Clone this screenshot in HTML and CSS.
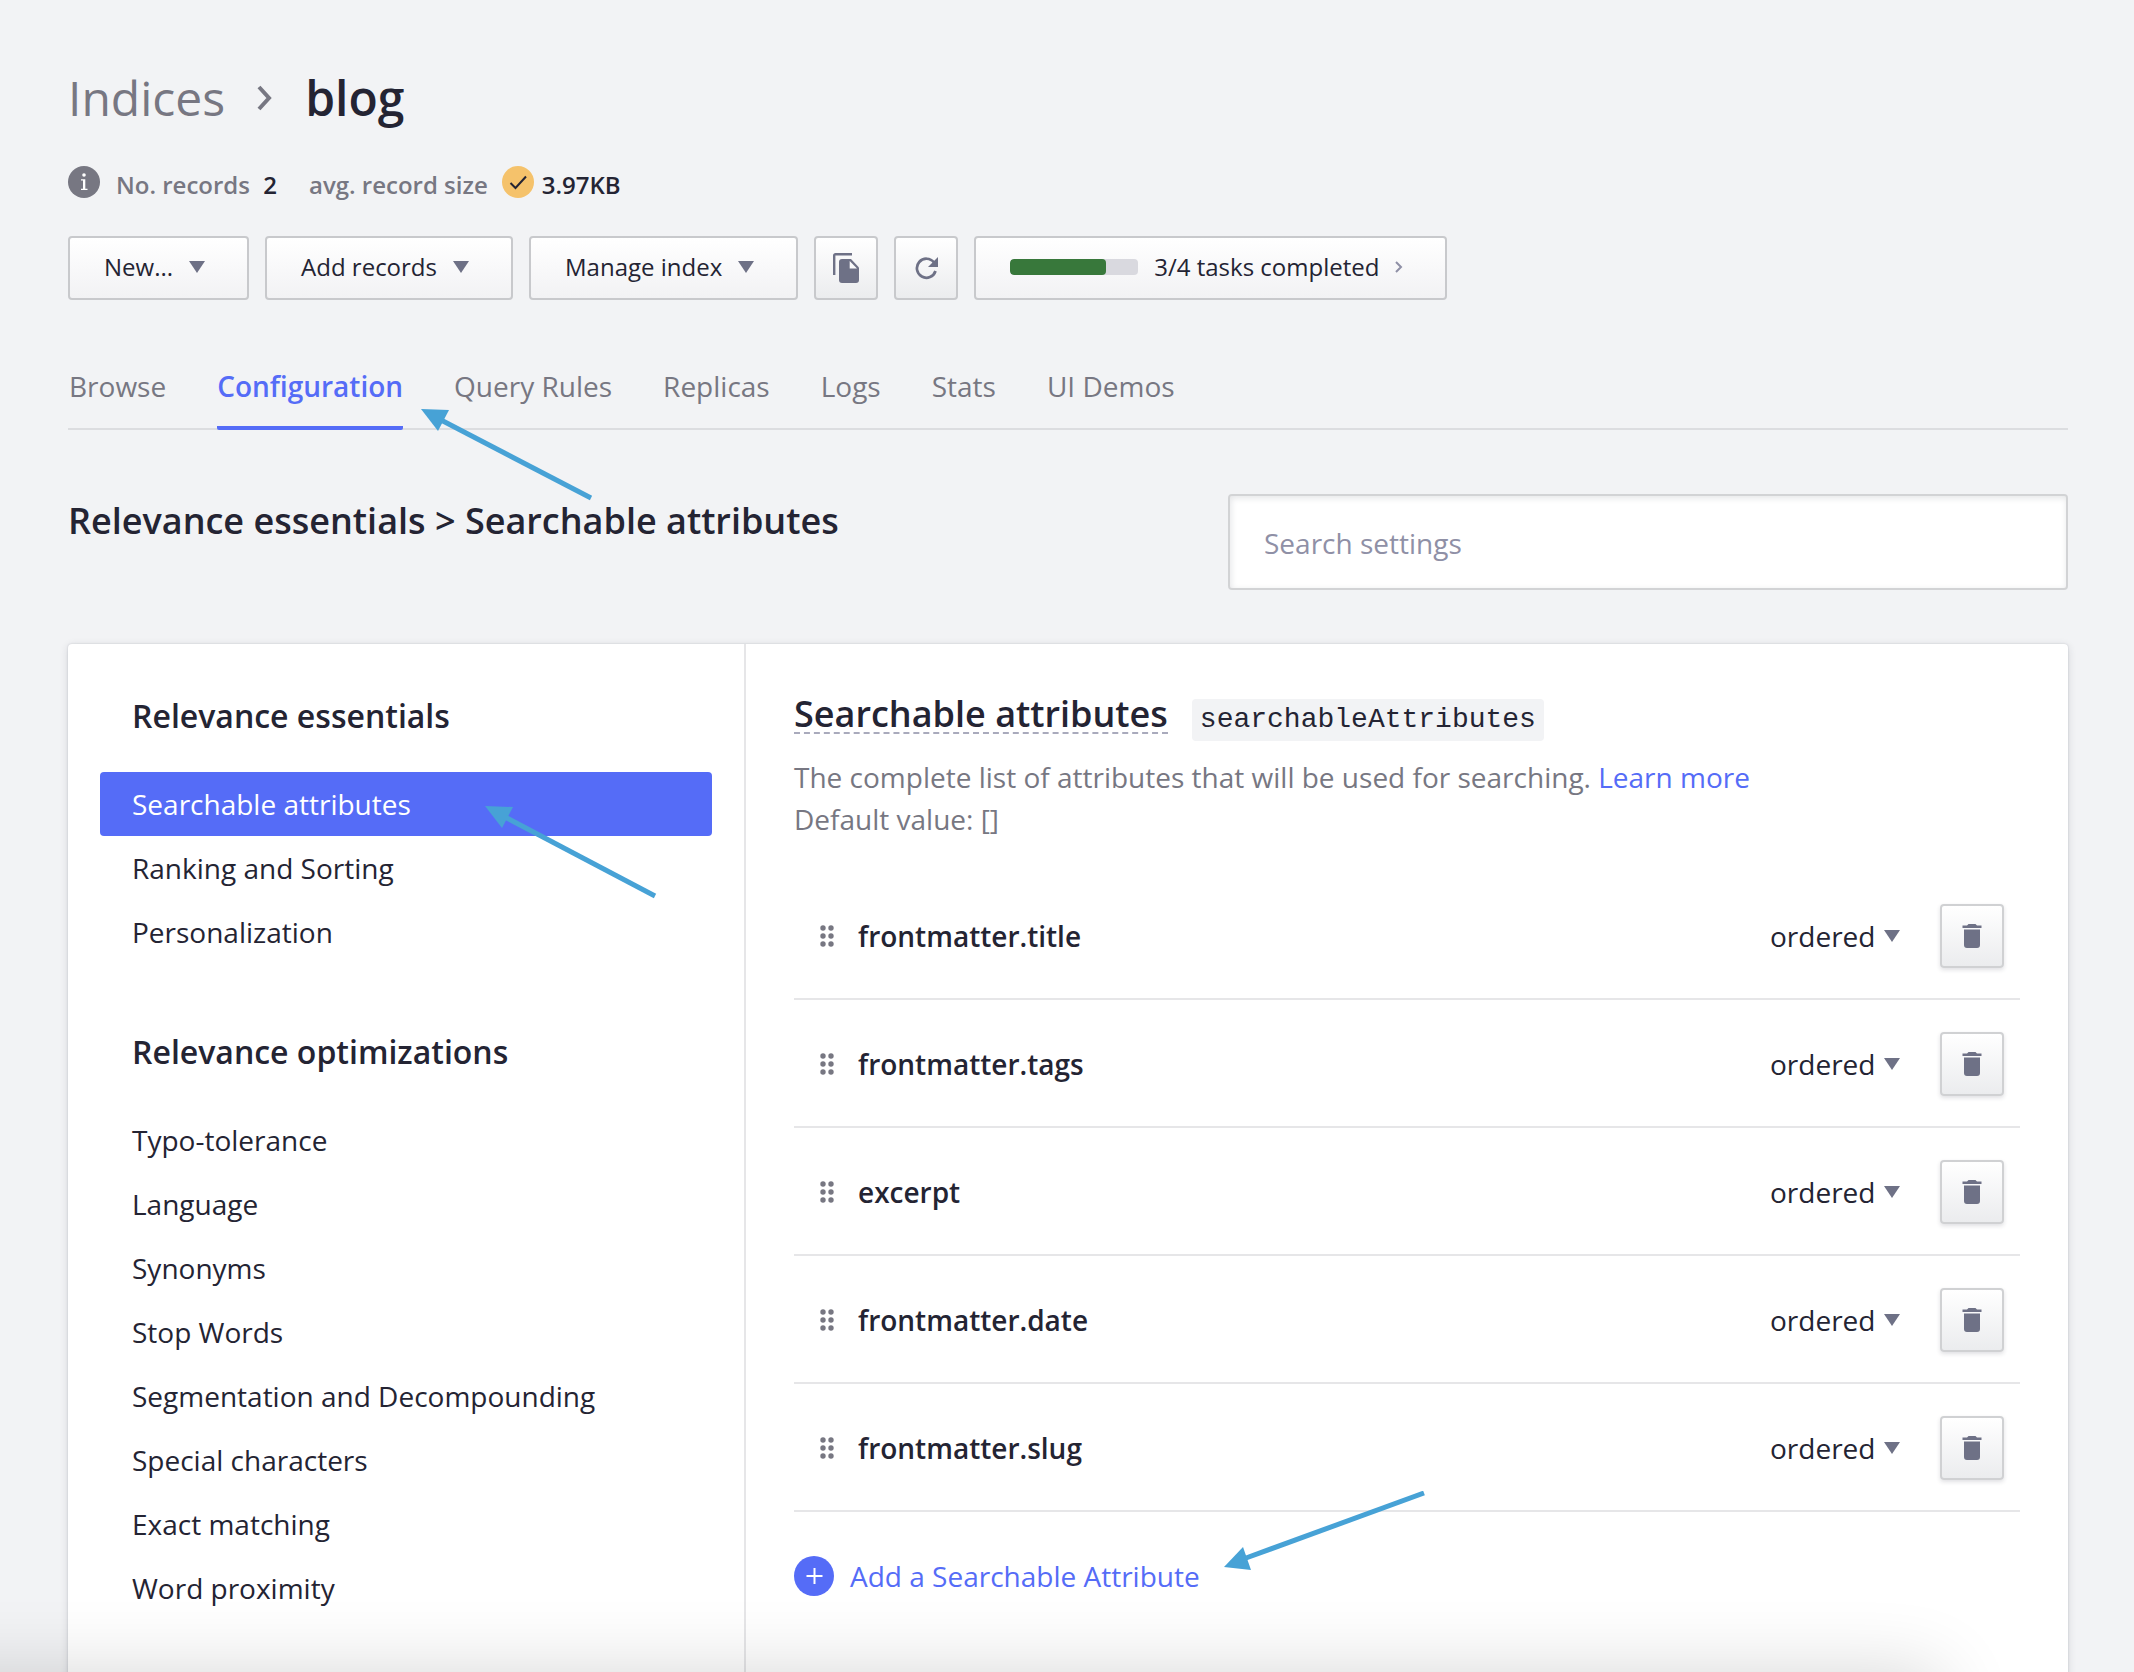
FILE: index.html
```html
<!DOCTYPE html>
<html lang="en">
<head>
<meta charset="utf-8">
<meta name="viewport" content="width=device-width, initial-scale=1">
<title>blog – Indices</title>
<link rel="stylesheet" href="styles.css">
</head>
<body>
<svg class="sprite" aria-hidden="true">
  <symbol id="caret" viewBox="0 0 16 12"><path d="M0 0h16l-8 12z"/></symbol>
  <symbol id="grip" viewBox="0 0 14 22">
    <circle cx="3" cy="3" r="2.7"/><circle cx="11" cy="3" r="2.7"/>
    <circle cx="3" cy="11" r="2.7"/><circle cx="11" cy="11" r="2.7"/>
    <circle cx="3" cy="19" r="2.7"/><circle cx="11" cy="19" r="2.7"/>
  </symbol>
  <symbol id="trash" viewBox="0 0 20 24">
    <path d="M0.5 1.5H5L6.500 0h7L15 1.500h4.500V4h-19zM2 5.500h16V21a3 3 0 0 1-3 3H5a3 3 0 0 1-3-3z"/>
  </symbol>
</svg>

<div class="page">
  <header>
    <nav class="crumbs" aria-label="Breadcrumb">
      <a href="#indices">Indices</a>
      <svg width="16" height="26" viewBox="0 0 16 26" fill="none" stroke="currentColor" stroke-width="4"><path d="M2 2l10 11L2 24"/></svg>
      <h1>blog</h1>
    </nav>

    <div class="stats">
      <svg class="badge" viewBox="0 0 32 32"><circle cx="16" cy="16" r="16" fill="#777782"/><circle cx="16" cy="9" r="1.800" fill="#fff"/><path d="M13 13.300H17.300V22.800H19.500V24H13V22.800H15V14.500H13z" fill="#fff"/></svg>
      <span class="stat">No. records <b>2</b></span>
      <span class="stat stat-size">avg. record size</span>
      <svg class="badge badge-ok" viewBox="0 0 32 32"><circle cx="16" cy="16" r="16" fill="#f5c26b"/><path d="M8.500 17l5 5L24 10.500" fill="none" stroke="#242433" stroke-width="2"/></svg>
      <b>3.97KB</b>
    </div>

    <div class="toolbar">
      <button class="btn" type="button">New... <svg class="caret"><use href="#caret"/></svg></button>
      <button class="btn" type="button">Add records <svg class="caret"><use href="#caret"/></svg></button>
      <button class="btn" type="button">Manage index <svg class="caret"><use href="#caret"/></svg></button>
      <button class="btn btn-icon" type="button" aria-label="Copy">
        <svg width="26" height="30" viewBox="0 0 26 30"><path d="M1.200 22V2.500A1.300 1.300 0 0 1 2.500 1.200H19" fill="none" stroke="currentColor" stroke-width="2.400"/><path d="M9 6h9l8 8.500V27a3 3 0 0 1-3 3H9a3 3 0 0 1-3-3V9a3 3 0 0 1 3-3z" fill="currentColor"/><path d="M16.700 8v7.500H24z" fill="#fafafb"/></svg>
      </button>
      <button class="btn btn-icon" type="button" aria-label="Refresh">
        <svg width="24" height="24" viewBox="0 0 24 24"><path d="M20 6.500A9.500 9.500 0 1 0 21.500 15" fill="none" stroke="currentColor" stroke-width="2.700"/><path d="M24 1v10H14z" fill="currentColor"/></svg>
      </button>
      <button class="btn" type="button">
        <span class="bar"><span class="bar-fill" style="width:75%"></span></span>
        3/4 tasks completed
        <svg width="8" height="12" viewBox="0 0 8 12" fill="none" stroke="#8f90a6" stroke-width="2"><path d="M1 1l5 5-5 5"/></svg>
      </button>
    </div>

    <nav class="tabs" aria-label="Index sections">
      <a href="#browse">Browse</a>
      <a class="active" href="#configuration">Configuration</a>
      <a href="#rules">Query Rules</a>
      <a href="#replicas">Replicas</a>
      <a href="#logs">Logs</a>
      <a href="#stats">Stats</a>
      <a href="#demos">UI Demos</a>
    </nav>
  </header>

  <div class="heading">
    <h2>Relevance essentials &gt; Searchable attributes</h2>
    <input class="search" type="search" placeholder="Search settings" aria-label="Search settings">
  </div>

  <div class="card">
    <nav class="sidebar" aria-label="Settings">
      <h3>Relevance essentials</h3>
      <a class="active" href="#searchable">Searchable attributes</a>
      <a href="#ranking">Ranking and Sorting</a>
      <a href="#personalization">Personalization</a>
      <h3>Relevance optimizations</h3>
      <a href="#typo">Typo-tolerance</a>
      <a href="#language">Language</a>
      <a href="#synonyms">Synonyms</a>
      <a href="#stop">Stop Words</a>
      <a href="#segmentation">Segmentation and Decompounding</a>
      <a href="#special">Special characters</a>
      <a href="#exact">Exact matching</a>
      <a href="#proximity">Word proximity</a>
    </nav>

    <main class="panel">
      <div class="panel-title">
        <h3>Searchable attributes</h3>
        <code>searchableAttributes</code>
      </div>
      <p class="help">The complete list of attributes that will be used for searching. <a href="#learn">Learn more</a><br>Default value: []</p>

      <ul class="rows">
        <li>
          <svg class="grip"><use href="#grip"/></svg>
          <span class="name">frontmatter.title</span>
          <span class="order"><select aria-label="Order of frontmatter.title"><option>ordered</option></select><svg class="caret"><use href="#caret"/></svg></span>
          <button class="btn btn-icon btn-trash" type="button" aria-label="Delete frontmatter.title"><svg class="trash"><use href="#trash"/></svg></button>
        </li>
        <li>
          <svg class="grip"><use href="#grip"/></svg>
          <span class="name">frontmatter.tags</span>
          <span class="order"><select aria-label="Order of frontmatter.tags"><option>ordered</option></select><svg class="caret"><use href="#caret"/></svg></span>
          <button class="btn btn-icon btn-trash" type="button" aria-label="Delete frontmatter.tags"><svg class="trash"><use href="#trash"/></svg></button>
        </li>
        <li>
          <svg class="grip"><use href="#grip"/></svg>
          <span class="name">excerpt</span>
          <span class="order"><select aria-label="Order of excerpt"><option>ordered</option></select><svg class="caret"><use href="#caret"/></svg></span>
          <button class="btn btn-icon btn-trash" type="button" aria-label="Delete excerpt"><svg class="trash"><use href="#trash"/></svg></button>
        </li>
        <li>
          <svg class="grip"><use href="#grip"/></svg>
          <span class="name">frontmatter.date</span>
          <span class="order"><select aria-label="Order of frontmatter.date"><option>ordered</option></select><svg class="caret"><use href="#caret"/></svg></span>
          <button class="btn btn-icon btn-trash" type="button" aria-label="Delete frontmatter.date"><svg class="trash"><use href="#trash"/></svg></button>
        </li>
        <li>
          <svg class="grip"><use href="#grip"/></svg>
          <span class="name">frontmatter.slug</span>
          <span class="order"><select aria-label="Order of frontmatter.slug"><option>ordered</option></select><svg class="caret"><use href="#caret"/></svg></span>
          <button class="btn btn-icon btn-trash" type="button" aria-label="Delete frontmatter.slug"><svg class="trash"><use href="#trash"/></svg></button>
        </li>
      </ul>

      <button class="add" type="button">
        <svg width="40" height="40" viewBox="0 0 40 40"><circle cx="20" cy="20" r="20" fill="#556cf7"/><path d="M20.500 12v16M12.500 20h16" stroke="#fff" stroke-width="2"/></svg>
        Add a Searchable Attribute
      </button>
    </main>
  </div>

  <svg class="arrow arrow-tab" width="174" height="94" viewBox="0 0 174 94"><path d="M0 0l28 1-11 21z"/><path d="M20 11l150 78" class="shaft"/></svg>
  <svg class="arrow arrow-side" width="174" height="94" viewBox="0 0 174 94"><path d="M0 0l28 1-11 21z"/><path d="M20 11l150 79" class="shaft"/></svg>
  <svg class="arrow arrow-add" width="202" height="80" viewBox="0 0 202 80"><path d="M0 76l19-20 8 23z"/><path d="M22 67L200 2" class="shaft"/></svg>
</div>
<div class="edge-shadow" aria-hidden="true"></div>
</body>
</html>
```
FILE: styles.css
```css
* { box-sizing: border-box; }

body {
  margin: 0;
  height: 100vh;
  overflow: hidden;
  background: #f2f3f5;
  color: #242433;
  font: 28px/42px "Open Sans", sans-serif;
}

a { color: #556cf7; text-decoration: none; }
h1, h2, h3 { margin: 0; font-weight: 600; }
b { color: #242433; font-weight: 600; }
button { font-family: inherit; color: inherit; cursor: pointer; }
.sprite { position: absolute; width: 0; height: 0; }

.page { position: relative; padding: 63px 66px 0 68px; }

.crumbs {
  display: flex;
  align-items: center;
  gap: 32px;
  font-size: 48px;
  line-height: 70px;
  color: #777782;
}
.crumbs a { color: inherit; }
.crumbs h1 { font-size: 48px; color: #242433; }

.stats {
  display: flex;
  align-items: center;
  margin-top: 33px;
  font-size: 24px;
  line-height: 38px;
  font-weight: 600;
  color: #777782;
}
.stat b { margin-left: 7px; }
.stat-size { margin-left: 32px; }
.badge { width: 32px; height: 32px; margin: 0 16px 6px 0; }
.badge-ok { margin: 0 8px 6px 14px; }

.toolbar { display: flex; gap: 16px; margin-top: 32px; }
.btn {
  display: flex;
  align-items: center;
  gap: 16px;
  height: 64px;
  padding: 0 42px 2px 34px;
  border: 2px solid #c8c9cc;
  border-radius: 4px;
  background: linear-gradient(#fff, #f2f2f4);
  font-size: 24px;
  line-height: 36px;
}
.btn svg { color: #6e7186; }
.btn-icon {
  justify-content: center;
  width: 64px;
  padding: 0;
  background: linear-gradient(#fff, #ebecee);
}
.bar {
  width: 128px;
  height: 16px;
  overflow: hidden;
  border-radius: 4px;
  background: #d9d9df;
}
.bar-fill { display: block; height: 100%; border-radius: 4px; background: #38783b; }
.caret { width: 16px; height: 12px; fill: #6e7186; }

.tabs {
  display: flex;
  gap: 51px;
  margin-top: 54px;
  padding-left: 1px;
  border-bottom: 2px solid #dcdde0;
}
.tabs a {
  padding: 11px 0 19px;
  margin-bottom: -2px;
  border-bottom: 4px solid transparent;
  border-radius: 2px;
  color: #777782;
}
.tabs .active { border-color: #556cf7; color: #556cf7; font-weight: 600; }

.heading {
  display: flex;
  justify-content: space-between;
  align-items: flex-start;
  margin-top: 64px;
}
.heading h2 { font-size: 36px; line-height: 54px; }
.search {
  width: 42%;
  height: 96px;
  padding: 2px 34px 0;
  border: 2px solid #d2d3d5;
  border-radius: 4px;
  background: #fff;
  box-shadow: inset 1px 2px 6px rgba(35, 38, 59, .12);
  font: inherit;
  color: inherit;
}
.search::placeholder { color: #8f90a6; opacity: 1; }

.card {
  display: flex;
  margin-top: 54px;
  border-radius: 4px;
  background: #fff;
  box-shadow: 0 0 2px rgba(35, 38, 59, .2), 0 2px 8px rgba(35, 38, 59, .14);
}
.sidebar {
  flex: 0 0 33.9%;
  padding: 48px 32px 64px;
  border-right: 2px solid #e6e6e8;
}
.sidebar h3 { padding: 0 32px; margin-bottom: 32px; font-size: 32px; line-height: 48px; }
.sidebar a + h3 { margin-top: 64px; }
.sidebar a {
  display: block;
  padding: 11px 32px;
  border-radius: 4px;
  color: #242433;
}
.sidebar .active { background: #556cf7; color: #fff; }

.panel { flex: 1; min-width: 0; padding: 52px 48px 48px; }
.panel-title { display: flex; align-items: baseline; gap: 24px; }
.panel-title h3 {
  border-bottom: 2px dashed #a9aabc;
  font-size: 36px;
  line-height: 36px;
}
.panel-title code {
  padding: 0 8px;
  border-radius: 4px;
  background: #f2f3f5;
  font: 28px/42px "Courier New", "Liberation Mono", monospace;
}
.help { margin: 15px 0 0; color: #777782; }

.rows { margin: 32px 0 0; padding: 0; list-style: none; }
.rows li {
  display: flex;
  align-items: center;
  padding: 32px 16px 30px 26px;
  border-bottom: 2px solid #e6e6e8;
}
.grip { width: 14px; height: 22px; margin-right: 24px; fill: #777782; }
.name { flex: 1; font-weight: 600; }
.order { display: flex; align-items: center; gap: 8px; margin-right: 40px; }
.order select {
  appearance: none;
  padding: 0;
  border: 0;
  background: none;
  font: inherit;
  color: inherit;
}
.btn-trash { border-color: #d0d1d3; box-shadow: 0 2px 4px rgba(35, 38, 59, .14); }
.trash { width: 20px; height: 24px; fill: #6e7186; }

.add {
  display: flex;
  align-items: center;
  gap: 16px;
  margin-top: 43px;
  padding: 0;
  border: 0;
  background: none;
  color: #556cf7;
  font-size: 28px;
  line-height: 42px;
}

/* Annotation arrows laid over the page */
.arrow { position: absolute; fill: #47a2d6; pointer-events: none; }
.arrow .shaft { fill: none; stroke: #47a2d6; stroke-width: 5; }
.arrow-tab { left: 421px; top: 409px; }
.arrow-side { left: 485px; top: 806px; }
.arrow-add { left: 1224px; top: 1491px; }

/* Soft shadow along the lower edge of the window */
.edge-shadow {
  position: fixed;
  left: -200px;
  right: 194px;
  top: 100%;
  height: 200px;
  box-shadow: 0 0 74px rgba(0, 0, 0, .16);
  pointer-events: none;
}
```
